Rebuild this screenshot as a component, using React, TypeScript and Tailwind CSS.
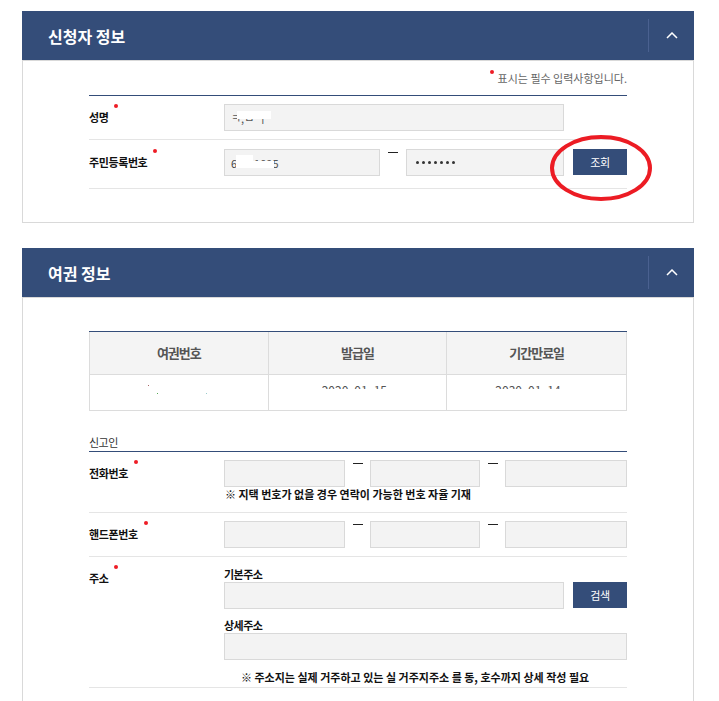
import React from "react";

function Dot() {
  return <span className="absolute -right-[10px] -top-[5px] h-[4px] w-[4px] rounded-full bg-[#ee1c25]" />;
}

function Label({ children, req = true, pt = "pt-[5px]" }: { children: React.ReactNode; req?: boolean; pt?: string }) {
  return (
    <div className={`w-[135px] shrink-0 ${pt} text-[11px] font-bold leading-[16px] tracking-[-0.4px] text-[#111]`}>
      <span className="relative">
        {children}
        {req && <Dot />}
      </span>
    </div>
  );
}

function Input({ w, children }: { w: string; children?: React.ReactNode }) {
  return (
    <div className={`${w} relative flex h-[27px] shrink-0 items-center border border-[#d9d9d9] bg-[#f3f3f3] pl-[6px]`}>
      {children}
    </div>
  );
}

function Dash({ w = "w-[26px]" }: { w?: string }) {
  return (
    <div className={`${w} flex shrink-0 justify-center`}>
      <span className="mt-[3px] h-px w-[10px] bg-[#222]" />
    </div>
  );
}

function Btn({ children }: { children: React.ReactNode }) {
  return (
    <div className="flex h-[26px] w-[54px] shrink-0 items-center justify-center bg-[#344d79] text-[11px] tracking-[-0.3px] text-white">
      {children}
    </div>
  );
}

function Header({ title }: { title: string }) {
  return (
    <div className="flex h-[49px] items-center bg-[#344d79]">
      <div className="flex-1 pl-[26px] text-[16px] font-bold text-white">{title}</div>
      <div className="h-[33px] w-px bg-[#4a6190]" />
      <div className="flex w-[45px] justify-center">
        <svg width="12" height="7" viewBox="0 0 12 7">
          <polyline points="1,6 6,1 11,6" fill="none" stroke="white" strokeWidth="1.5" />
        </svg>
      </div>
    </div>
  );
}

function ClipDate({ text, pl }: { text: string; pl: string }) {
  return (
    <div className={`${pl} pt-[9px]`}>
      <div className="h-[5px] overflow-hidden whitespace-nowrap text-[12px] leading-[12px] text-[#555]">{text}</div>
    </div>
  );
}

export default function App() {
  return (
    <div className="min-h-[701px] w-[719px] bg-white font-['Noto_Sans_CJK_KR',sans-serif] pt-[11px]">
      {/* Panel 1 */}
      <div className="ml-[22px] w-[672px]">
        <Header title="신청자 정보" />
        <div className="border-x border-b border-t border-[#d9d9d9] pb-[33px] pt-[9px]">
          <div className="mx-auto w-[538px]">
            <div className="mb-[9px] flex h-[16px] items-center justify-end text-[11px] leading-[16px] text-[#666]">
              <span className="relative mr-[4px] -top-[6px] h-[4px] w-[4px] rounded-full bg-[#ee1c25]" />
              <span>표시는 필수 입력사항입니다.</span>
            </div>
            <div className="h-px bg-[#344d79]" />

            <div className="flex border-b border-[#e5e5e5] pb-[8px] pt-[8px]">
              <Label>성명</Label>
              <Input w="w-[340px]">
                <span className="text-[11px] leading-[12px] text-[#555]">ㅋ,ㅁ ㅓ</span>
                <span className="absolute left-[12px] top-[6px] h-[8px] w-[34px] bg-white" />
              </Input>
            </div>

            <div className="flex border-b border-[#e5e5e5] pb-[12px] pt-[9px]">
              <Label>주민등록번호</Label>
              <div className="flex">
                <Input w="w-[156px]">
                  <span className="text-[11px] leading-[12px] text-[#444]">6</span>
                  <span className="ml-[17px] text-[11px] leading-[12px] text-[#555]">1095</span>
                  <span className="absolute left-[11px] top-[5px] h-[13px] w-[17px] bg-white" />
                  <span className="absolute left-[28px] top-[11px] h-[7px] w-[21px] bg-white" />
                </Input>
                <Dash />
                <Input w="w-[158px]">
                  <div className="ml-[3px] flex gap-[3px]">
                    {[0, 1, 2, 3, 4, 5, 6].map((i) => (
                      <span key={i} className="h-[3px] w-[3px] rounded-full bg-[#333]" />
                    ))}
                  </div>
                </Input>
                <div className="relative ml-[9px]">
                  <Btn>조회</Btn>
                  <svg className="pointer-events-none absolute -left-[23px] -top-[14px]" width="102" height="66" viewBox="0 0 102 66">
                    <ellipse cx="51" cy="33" rx="49" ry="31" fill="none" stroke="#ec1c24" strokeWidth="4" />
                  </svg>
                </div>
              </div>
            </div>
          </div>
        </div>
      </div>

      {/* Panel 2 */}
      <div className="ml-[22px] mt-[25px] w-[672px]">
        <Header title="여권 정보" />
        <div className="border-x border-t border-[#d9d9d9] pb-[40px] pt-[33px]">
          <div className="mx-auto w-[538px]">
            <div className="border-t border-[#344d79]">
              <div className="grid grid-cols-3 border-x border-b border-[#dcdcdc] bg-[#f4f4f4]">
                {["여권번호", "발급일", "기간만료일"].map((t, i) => (
                  <div
                    key={t}
                    className={`flex h-[42px] items-center justify-center text-[13px] font-bold tracking-[-1px] text-[#555] ${i < 2 ? "border-r border-[#dcdcdc]" : ""}`}
                  >
                    {t}
                  </div>
                ))}
              </div>
              <div className="grid h-[36px] grid-cols-3 border-x border-b border-[#dcdcdc]">
                <div className="relative border-r border-[#dcdcdc]">
                  <span className="absolute left-[58px] top-[10px] h-px w-px bg-[#a66]" />
                  <span className="absolute left-[67px] top-[18px] h-px w-px bg-[#5a5]" />
                  <span className="absolute left-[116px] top-[18px] h-px w-px bg-[#9cc]" />
                </div>
                <div className="border-r border-[#dcdcdc]">
                  <ClipDate text="2020. 01. 15" pl="pl-[53px]" />
                </div>
                <div>
                  <ClipDate text="2030. 01. 14" pl="pl-[48px]" />
                </div>
              </div>
            </div>

            <div className="mt-[23px] text-[11px] leading-[16px] tracking-[-0.5px] text-[#333]">신고인</div>
            <div className="mt-px h-px bg-[#344d79]" />

            <div className="flex border-b border-[#e5e5e5] pb-[11px] pt-[8px]">
              <Label>전화번호</Label>
              <div>
                <div className="flex">
                  <Input w="w-[121px]" />
                  <Dash w="w-[25px]" />
                  <Input w="w-[110px]" />
                  <Dash w="w-[25px]" />
                  <Input w="w-[122px]" />
                </div>
                <div className="pl-px text-[11px] font-bold leading-[14px] text-[#111]">
                  ※ 지택 번호가 없을 경우 연락이 가능한 번호 자율 기재
                </div>
              </div>
            </div>

            <div className="flex border-b border-[#e5e5e5] pb-[8px] pt-[8px]">
              <Label>핸드폰번호</Label>
              <div className="flex">
                <Input w="w-[121px]" />
                <Dash w="w-[25px]" />
                <Input w="w-[110px]" />
                <Dash w="w-[25px]" />
                <Input w="w-[122px]" />
              </div>
            </div>

            <div className="flex border-b border-[#e5e5e5] pb-[3px] pt-[9px]">
              <Label pt="pt-[4px]">주소</Label>
              <div className="w-[403px]">
                <div className="text-[11px] font-bold leading-[16px] tracking-[-0.5px] text-[#111]">기본주소</div>
                <div className="flex">
                  <Input w="w-[340px]" />
                  <div className="ml-[9px]">
                    <Btn>검색</Btn>
                  </div>
                </div>
                <div className="mt-[8px] text-[11px] font-bold leading-[16px] tracking-[-0.5px] text-[#111]">상세주소</div>
                <Input w="w-[403px]" />
                <div className="mt-[10px] pl-[17px] text-[11px] font-bold leading-[14px] text-[#111]">
                  ※ 주소지는 실제 거주하고 있는 실 거주지주소 를 동, 호수까지 상세 작성 필요
                </div>
              </div>
            </div>
          </div>
        </div>
      </div>
    </div>
  );
}
